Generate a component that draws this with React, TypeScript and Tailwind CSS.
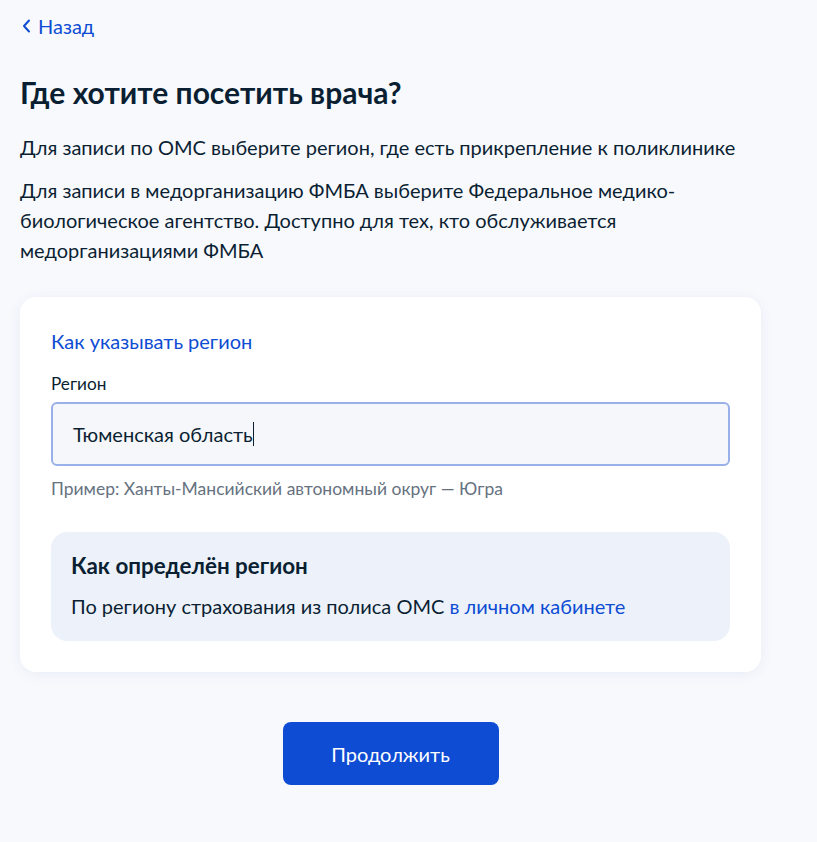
import React from "react";

export default function App() {
  return (
    <div className="min-h-screen bg-[#f8f9fd] font-['Lato','Noto_Sans',sans-serif] text-[#0b1f33]">
      <div className="w-[741px] ml-[20px] pt-[14px] pb-[56px]">
        <a href="#" className="flex items-center gap-[7px] text-[#0d4cd3] text-[20px] leading-[24px] w-fit">
          <svg width="9" height="14" viewBox="0 0 9 14" fill="none" className="ml-[2px]">
            <path d="M7 1.5L2 7l5 5.5" stroke="#0d4cd3" strokeWidth="2" strokeLinecap="round" strokeLinejoin="round" />
          </svg>
          Назад
        </a>

        <h1 className="mt-[36px] text-[30px] leading-[36px] font-bold">Где хотите посетить врача?</h1>

        <p className="mt-[22px] text-[20px] leading-[30px]">
          Для записи по ОМС выберите регион, где есть прикрепление к поликлинике
        </p>
        <p className="mt-[13px] text-[20px] leading-[30px]">
          Для записи в медорганизацию ФМБА выберите Федеральное медико-биологическое агентство. Доступно для тех, кто обслуживается медорганизациями ФМБА
        </p>

        <div className="mt-[32px] bg-white rounded-[16px] shadow-[0_2px_14px_rgba(40,70,160,0.07)] px-[31px] pt-[29px] pb-[31px]">
          <a href="#" className="block text-[#0d4cd3] text-[20px] leading-[30px] w-fit">
            Как указывать регион
          </a>
          <div className="mt-[16px] text-[17.2px] leading-[24px]">Регион</div>
          <div className="mt-[6px] h-[64px] rounded-[6px] border-2 border-[#99b0e8] bg-[#f5f7fa] flex items-center px-[20px] text-[20px]">
            <span>Тюменская область</span>
            <span className="w-px h-[24px] bg-[#0b1f33]" />
          </div>
          <div className="mt-[11px] text-[17.5px] leading-[24px] text-[#66727f]">
            Пример: Ханты-Мансийский автономный округ — Югра
          </div>

          <div className="mt-[31px] rounded-[16px] bg-[#edf2fa] px-[20px] pt-[20px] pb-[21px]">
            <div className="text-[22.4px] leading-[28px] font-bold">Как определён регион</div>
            <div className="mt-[12px] text-[20px] leading-[28px]">
              По региону страхования из полиса ОМС{" "}
              <a href="#" className="text-[#0d4cd3]">в личном кабинете</a>
            </div>
          </div>
        </div>

        <div className="mt-[50px] flex justify-center">
          <button className="w-[216px] h-[63px] rounded-[8px] bg-[#0d4cd3] text-white text-[20px]">
            Продолжить
          </button>
        </div>
      </div>
    </div>
  );
}
